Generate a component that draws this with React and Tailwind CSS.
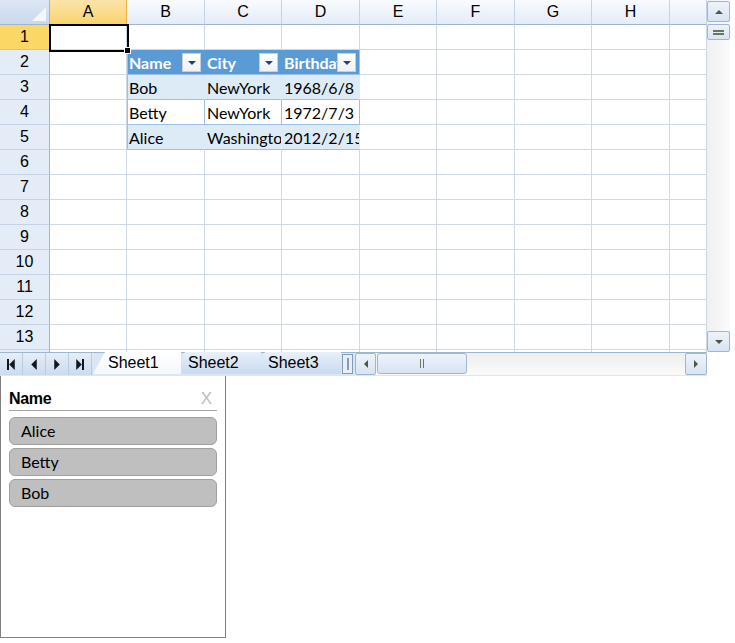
import React from 'react';

const cols = ['A', 'B', 'C', 'D', 'E', 'F', 'G', 'H', ''];
const widths = [77, 78, 77, 78, 77, 78, 77, 78, 37];
const rows = [1, 2, 3, 4, 5, 6, 7, 8, 9, 10, 11, 12, 13, 14];

const table = {
  2: ['Name', 'City', 'Birthday'],
  3: ['Bob', 'NewYork', '1968/6/8'],
  4: ['Betty', 'NewYork', '1972/7/3'],
  5: ['Alice', 'Washington', '2012/2/15'],
};

function Tri({ dir = 'down', className = '' }) {
  const pts = {
    down: '0,0 8,0 4,4',
    up: '0,4 8,4 4,0',
    left: '4,0 4,8 0,4',
    right: '0,0 0,8 4,4',
  }[dir];
  const vb = dir === 'down' || dir === 'up' ? '0 0 8 4' : '0 0 4 8';
  return (
    <svg viewBox={vb} className={className}>
      <polygon points={pts} fill="currentColor" />
    </svg>
  );
}

function FilterBtn() {
  return (
    <div className="absolute right-[3px] top-[3px] w-[19px] h-[19px] bg-gradient-to-b from-white to-[#eef1f6] border border-[#c9ced6] flex items-center justify-center text-[#2f3b73]">
      <Tri dir="down" className="w-[8px] h-[4px]" />
    </div>
  );
}

function Cell({ r, c, w }) {
  const data = table[r];
  const idx = c - 1;
  const inTable = data && idx >= 0 && idx < 3;
  let cls = 'relative h-[25px] border-r border-b border-[#d0d7e5] overflow-hidden whitespace-nowrap';
  let content = null;
  if (inTable) {
    if (r === 2) {
      cls += ' bg-[#5b9bd5] text-white font-bold border-r-[#5b9bd5] border-b-[#9bc2e6]';
    } else if (r === 4) {
      cls += ' bg-white border-r-[#9bc2e6] border-b-[#9bc2e6]';
    } else {
      cls += ' bg-[#ddebf7] border-r-[#ddebf7] border-b-[#9bc2e6]';
    }
    if (idx === 0) cls += ' shadow-[inset_1px_0_0_#9bc2e6]';
    if (idx === 2) cls += ' border-r-[#9bc2e6]';
    content = (
      <>
        <span className="absolute left-[2px] top-[2px] text-[16px] leading-[21px] font-['Lato',sans-serif]">
          {data[idx]}
        </span>
        {r === 2 && <FilterBtn />}
      </>
    );
  }
  return (
    <div className={cls} style={{ width: w }}>
      {content}
    </div>
  );
}

function SheetTab({ label, active }) {
  return (
    <div
      className={
        'relative h-[22px] w-[88px] -mr-[8px] flex items-center pl-[15px] text-[16px] font-["Liberation_Sans",Arial,sans-serif] text-black [clip-path:polygon(12px_0,100%_0,100%_100%,0_100%)] ' +
        (active
          ? 'bg-gradient-to-b from-white to-[#f4f7fb] z-10'
          : 'bg-gradient-to-b from-[#e8f0fa] to-[#c9daf0]')
      }
    >
      {label}
    </div>
  );
}

function NavBtn({ children }) {
  return (
    <div className="w-[23px] h-[22px] flex items-center justify-center text-[#10161f] border-r border-[#b9cbe1]">
      {children}
    </div>
  );
}

function ScrollBtn({ children, className = '' }) {
  return (
    <div
      className={
        'flex items-center justify-center bg-gradient-to-b from-[#eef3fa] to-[#d8e4f3] border border-[#9fb6d3] rounded-[2px] text-[#4c5a3c] ' +
        className
      }
    >
      {children}
    </div>
  );
}

export default function App() {
  return (
    <div className="w-[735px] h-[643px] bg-white relative overflow-hidden font-['Liberation_Sans',Arial,sans-serif]">
      <div className="flex">
        {/* sheet grid */}
        <div className="w-[707px] h-[352px] overflow-hidden relative">
          {/* header row */}
          <div className="flex h-[25px]">
            <div className="w-[50px] h-[25px] bg-gradient-to-b from-[#dde7f4] to-[#c9d8ec] border-r border-b border-[#9eb6ce] relative">
              <div className="absolute right-[3px] bottom-[3px] w-0 h-0 border-l-[14px] border-l-transparent border-b-[14px] border-b-[#f3f6fb]" />
            </div>
            {cols.map((c, i) => (
              <div
                key={i}
                style={{ width: widths[i] }}
                className={
                  'h-[25px] flex items-center justify-center text-[16px] border-r border-b ' +
                  (c === 'A'
                    ? 'bg-gradient-to-b from-[#fbe4a8] to-[#f8d46c] border-[#f2b243] border-b-[#e0a52f]'
                    : 'bg-gradient-to-b from-[#f9fbfe] to-[#e4ecf7] border-[#c5d3e5] border-b-[#9eb6ce]')
                }
              >
                {c}
              </div>
            ))}
          </div>
          {rows.map((r) => (
            <div key={r} className="flex h-[25px]">
              <div
                className={
                  'w-[50px] h-[25px] flex items-center justify-center text-[16px] border-r border-b ' +
                  (r === 1
                    ? 'bg-[#fbd766] border-r-[#e0a52f] border-b-[#f2c24f]'
                    : 'bg-[#e4ecf7] border-r-[#9eb6ce] border-b-[#c5d3e5]')
                }
              >
                {r}
              </div>
              {widths.map((w, i) => (
                <Cell key={i} r={r} c={i} w={w} />
              ))}
            </div>
          ))}
          {/* active cell A1 */}
          <div className="absolute left-[49px] top-[24px] w-[80px] h-[28px] border-2 border-black pointer-events-none" />
          <div className="absolute left-[125px] top-[48px] w-[5px] h-[5px] bg-black border border-white box-content -ml-[1px] -mt-[1px]" />
        </div>

        {/* vertical scrollbar */}
        <div className="w-[23px] h-[352px] flex flex-col bg-gradient-to-r from-[#f0f0f0] to-[#fbfbfb]">
          <ScrollBtn className="h-[21px] mt-[1px]">
            <Tri dir="up" className="w-[8px] h-[4px]" />
          </ScrollBtn>
          <ScrollBtn className="h-[16px] mt-[2px] flex-col gap-[1px]">
            <div className="w-[11px] h-[2px] bg-[#6b7559]" />
            <div className="w-[11px] h-[2px] bg-[#6b7559]" />
          </ScrollBtn>
          <div className="flex-1" />
          <ScrollBtn className="h-[21px]">
            <Tri dir="down" className="w-[8px] h-[4px]" />
          </ScrollBtn>
        </div>
      </div>

      {/* tab bar + horizontal scrollbar */}
      <div className="flex h-[24px] w-[707px] bg-[#dbe6f4] border-t border-[#9eb6ce]">
        <div className="flex items-center h-[22px] bg-gradient-to-b from-[#e6eef9] to-[#cbdbef] w-[93px]">
          <NavBtn>
            <div className="flex items-center">
              <div className="w-[2px] h-[11px] bg-[#10161f]" />
              <Tri dir="left" className="w-[6px] h-[11px]" />
            </div>
          </NavBtn>
          <NavBtn>
            <Tri dir="left" className="w-[6px] h-[11px]" />
          </NavBtn>
          <NavBtn>
            <Tri dir="right" className="w-[6px] h-[11px]" />
          </NavBtn>
          <NavBtn>
            <div className="flex items-center">
              <Tri dir="right" className="w-[6px] h-[11px]" />
              <div className="w-[2px] h-[11px] bg-[#10161f]" />
            </div>
          </NavBtn>
        </div>
        <div className="flex h-[23px] -mt-[1px] w-[248px]">
          <SheetTab label="Sheet1" active />
          <SheetTab label="Sheet2" />
          <SheetTab label="Sheet3" />
        </div>
        <div className="w-[11px] h-[20px] mt-[1px] ml-[1px] border border-[#7f9db9] bg-[#e7eef8] flex items-center justify-center">
          <div className="w-[2px] h-[12px] bg-[#7f9db9]" />
        </div>
        <div className="flex-1 flex h-[22px] ml-[2px] bg-gradient-to-b from-[#eeeeee] to-[#fafafa]">
          <ScrollBtn className="w-[21px] h-[22px]">
            <Tri dir="left" className="w-[4px] h-[8px]" />
          </ScrollBtn>
          <ScrollBtn className="w-[90px] h-[21px] ml-[1px] rounded-[3px] gap-[2px]">
            <div className="w-[1px] h-[9px] bg-[#6b7559]" />
            <div className="w-[1px] h-[9px] bg-[#6b7559]" />
          </ScrollBtn>
          <div className="flex-1" />
          <ScrollBtn className="w-[22px] h-[22px]">
            <Tri dir="right" className="w-[4px] h-[8px]" />
          </ScrollBtn>
        </div>
      </div>

      {/* slicer */}
      <div className="w-[226px] h-[262px] border border-[#7f7f7f] border-t-0 px-[8px] pt-[13px] bg-white">
        <div className="flex items-center justify-between border-b border-[#a6a6a6] pb-[1px] h-[22px]">
          <span className="font-bold text-[16px] tracking-[-0.3px] text-black">Name</span>
          <span className="text-[17px] text-[#bdbdbd] font-light mr-[5px]">X</span>
        </div>
        <div className="flex flex-col gap-[3px] mt-[6px]">
          {['Alice', 'Betty', 'Bob'].map((n) => (
            <div
              key={n}
              className="h-[28px] bg-[#bfbfbf] border border-[#a0a0a0] rounded-[6px] pl-[11px] flex items-center text-[16px] font-['Lato',sans-serif] text-black"
            >
              {n}
            </div>
          ))}
        </div>
      </div>
    </div>
  );
}
